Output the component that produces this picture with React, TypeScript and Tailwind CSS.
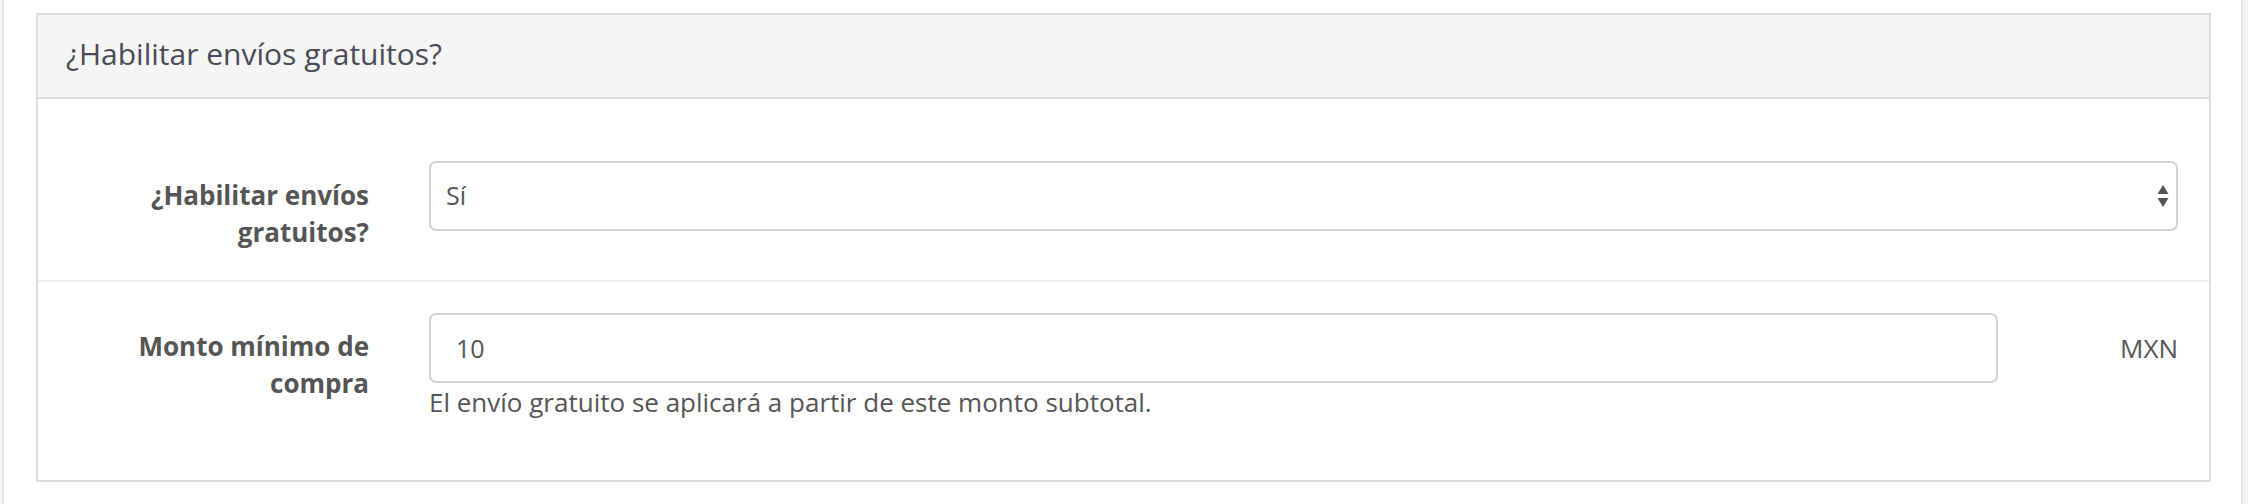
import React from 'react';

const font = { fontFamily: '"Open Sans", "Noto Sans", sans-serif' };

const SelectArrows: React.FC = () => (
  <svg width="12" height="24" viewBox="0 0 12 24" className="pointer-events-none absolute right-[9px] top-1/2 -translate-y-1/2">
    <path d="M6 1 L11.5 10 L0.5 10 Z" fill="#555" />
    <path d="M0.5 14 L11.5 14 L6 23 Z" fill="#555" />
  </svg>
);

const App: React.FC = () => {
  return (
    <div className="h-[504px] w-full bg-[#f4f4f4] pl-[2px] pr-[5px]" style={font}>
      <div className="h-full border-x-2 border-[#e4e4e4] bg-white pl-[32px] pr-[30px] pt-[13px]">
        <div className="border-2 border-[#dddddd] bg-white">
          <div className="flex h-[84px] items-center border-b-2 border-[#dddddd] bg-[#f5f5f5] pb-[6px] pl-[28px]">
            <h3 className="text-[30px] text-[#4a4b56]">¿Habilitar envíos gratuitos?</h3>
          </div>

          <div className="flex h-[183px] items-start border-b-2 border-[#eeeeee] pt-[62px] pr-[31px]">
            <label className="w-[331px] shrink-0 pt-[16px] text-right text-[26px] font-bold leading-[37px] text-[#555]">
              ¿Habilitar envíos
              <br />
              gratuitos?
            </label>
            <div className="relative ml-[60px] flex-1">
              <select
                defaultValue="1"
                className="h-[70px] w-full appearance-none rounded-[7px] border-2 border-[#d2d2d2] bg-white pl-[15px] text-[25px] text-[#555] outline-none"
                style={font}
              >
                <option value="1">Sí</option>
                <option value="0">No</option>
              </select>
              <SelectArrows />
            </div>
          </div>

          <div className="flex h-[198px] items-start pt-[31px] pr-[31px]">
            <label className="w-[331px] shrink-0 pt-[15px] text-right text-[26px] font-bold leading-[37px] text-[#555]">
              Monto mínimo de
              <br />
              compra
            </label>
            <div className="ml-[60px] flex-1">
              <div className="flex items-start">
                <input
                  defaultValue="10"
                  className="h-[70px] flex-1 rounded-[7px] border-2 border-[#d2d2d2] bg-white pl-[25px] text-[25px] text-[#555] outline-none"
                  style={font}
                />
                <div className="flex h-[70px] w-[180px] items-center justify-end text-[26px] text-[#555]">MXN</div>
              </div>
              <p className="mt-[3px] text-[26px] leading-[32px] text-[#555]">
                El envío gratuito se aplicará a partir de este monto subtotal.
              </p>
            </div>
          </div>
        </div>
      </div>
    </div>
  );
};

export default App;
